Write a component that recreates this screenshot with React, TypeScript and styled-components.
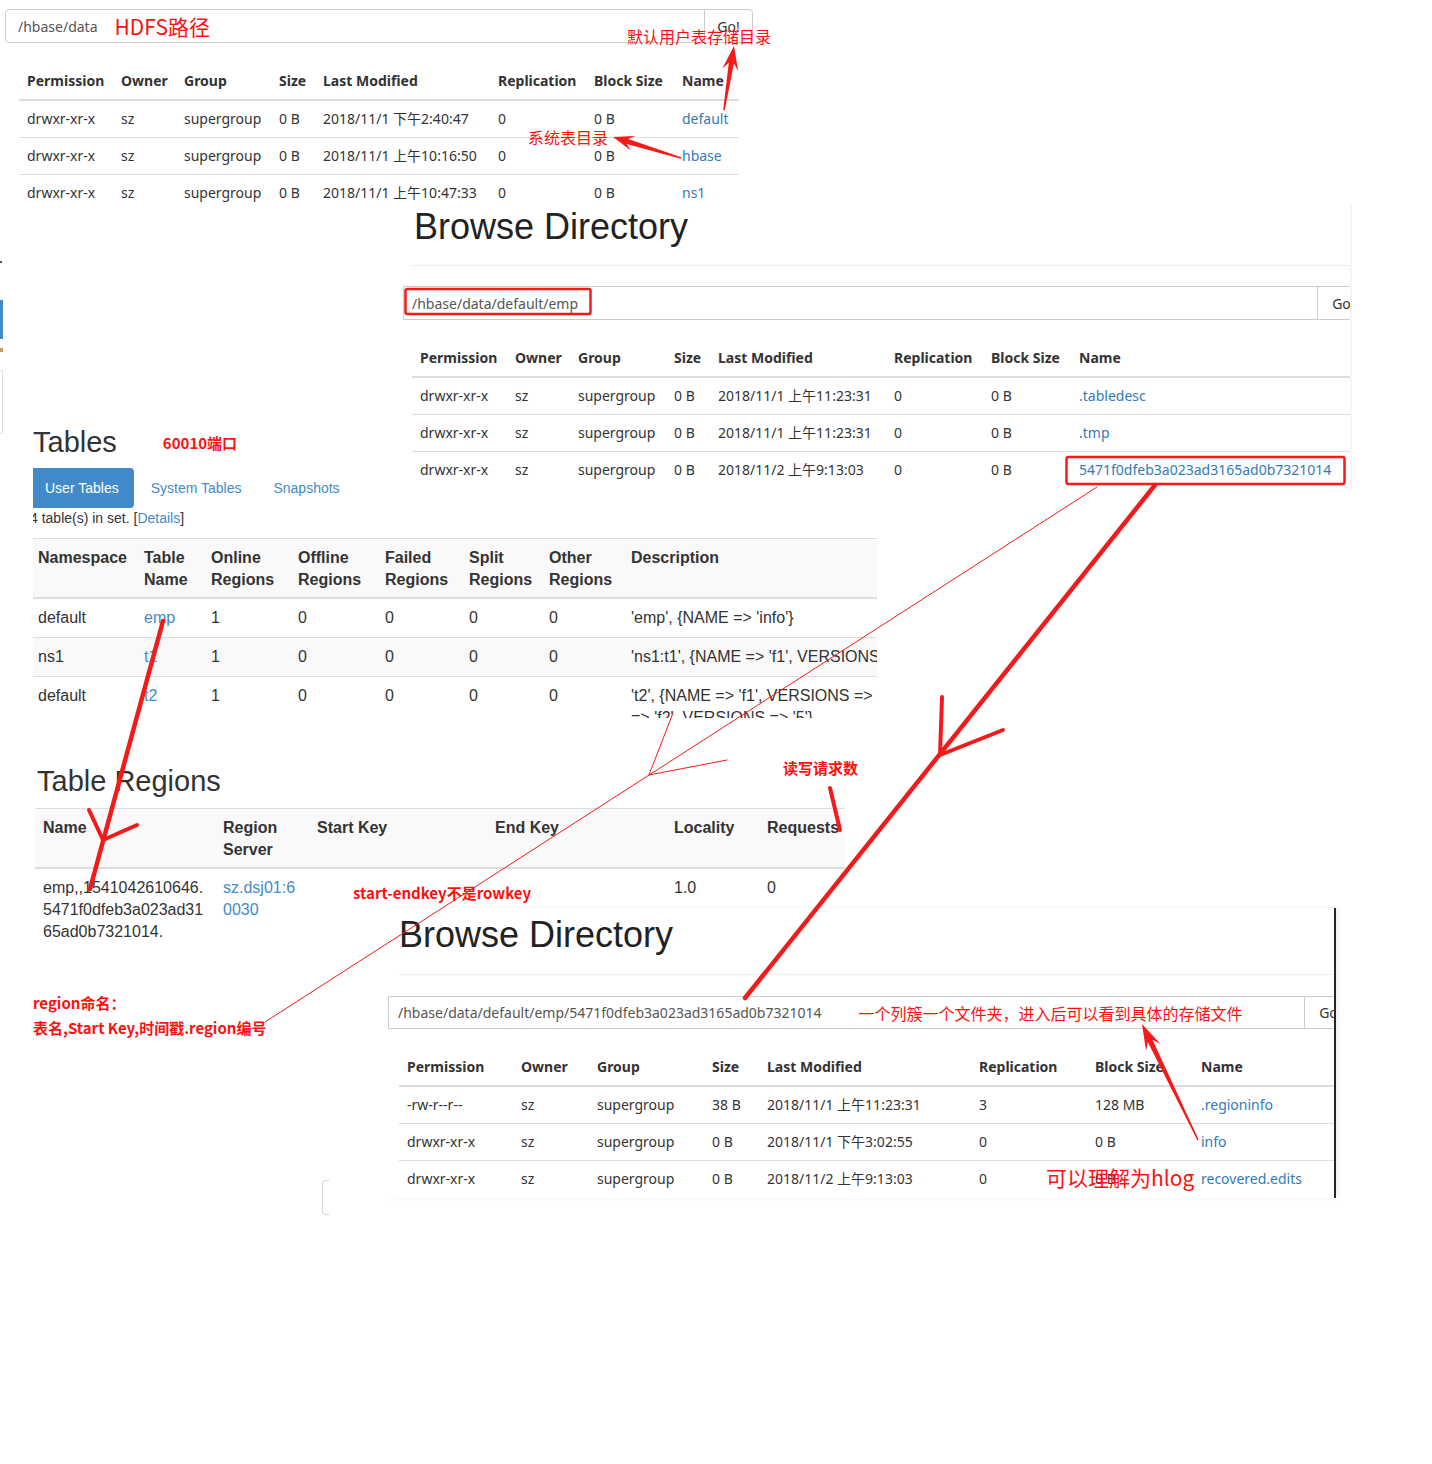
import React from "react";
import styled, { createGlobalStyle } from "styled-components";

const GlobalStyle = createGlobalStyle`
  html, body { margin: 0; padding: 0; background: #fff; }
  body { font-family: "Noto Sans", "Noto Sans CJK SC", sans-serif; }
`;

const RED = "#ff1010";
const LINE_RED = "#f51a1a";

/* ---------- canvas & scraps ---------- */

const Canvas = styled.div`
  position: relative;
  width: 1432px;
  height: 1464px;
  overflow: hidden;
  background: #fff;
`;

const Scrap = styled.section<{ $x: number; $y: number; $w: number; $h: number }>`
  position: absolute;
  left: ${(p) => p.$x}px;
  top: ${(p) => p.$y}px;
  width: ${(p) => p.$w}px;
  height: ${(p) => p.$h}px;
  box-sizing: border-box;
  overflow: hidden;
  background: #fff;
  display: flex;
  flex-direction: column;
  align-items: flex-start;
`;

const HdfsScrap = styled(Scrap)<{ $edge?: "soft" | "dark" }>`
  font-family: "Noto Sans", "Noto Sans CJK SC", sans-serif;
  font-size: 14px;
  color: #333;
  border-right: ${(p) =>
    p.$edge === "dark" ? "2px solid #262626" : p.$edge === "soft" ? "2px solid #f5f5f5" : "0"};
  box-shadow: ${(p) => (p.$edge === "dark" ? "3px 0 4px rgba(0,0,0,0.06)" : "none")};
`;

const HBaseScrap = styled(Scrap)`
  font-family: "Liberation Sans", Arial, "Noto Sans CJK SC", sans-serif;
  font-size: 14px;
  color: #333;
`;

/* ---------- HDFS page parts ---------- */

const PageTitle = styled.h1<{ $ml: number; $mt: number }>`
  margin: ${(p) => p.$mt}px 0 0 ${(p) => p.$ml}px;
  font-family: "Liberation Sans", Arial, sans-serif;
  font-size: 36px;
  font-weight: 400;
  line-height: 40px;
  color: #222;
  white-space: nowrap;
  flex: none;
`;

const Rule = styled.div<{ $ml: number; $mt: number }>`
  flex: none;
  align-self: stretch;
  margin: ${(p) => p.$mt}px 0 0 ${(p) => p.$ml}px;
  border-top: 1px solid #eee;
`;

const PathGroup = styled.div<{ $w: number; $h: number; $ml: number; $mt: number; $round?: boolean }>`
  flex: none;
  display: flex;
  box-sizing: border-box;
  width: ${(p) => p.$w}px;
  height: ${(p) => p.$h}px;
  margin: ${(p) => p.$mt}px 0 0 ${(p) => p.$ml}px;
  border: 1px solid #ccc;
  border-radius: ${(p) => (p.$round ? "4px" : "0")};
  background: #fff;
`;

const PathField = styled.div<{ $pl: number }>`
  flex: 1;
  display: flex;
  align-items: center;
  padding-left: ${(p) => p.$pl}px;
  color: #555;
  white-space: nowrap;
  overflow: hidden;
`;

const GoButton = styled.div`
  flex: none;
  width: 48px;
  box-sizing: border-box;
  border-left: 1px solid #ccc;
  display: flex;
  align-items: center;
  justify-content: center;
  color: #333;
`;

const InlineNote = styled.span<{ $size: number; $gap: number }>`
  margin-left: ${(p) => p.$gap}px;
  font-family: "Noto Sans CJK SC", sans-serif;
  font-size: ${(p) => p.$size}px;
  color: ${RED};
  line-height: 1;
`;

const DirTable = styled.table<{ $w: number; $ml: number; $mt: number }>`
  flex: none;
  width: ${(p) => p.$w}px;
  margin: ${(p) => p.$mt}px 0 0 ${(p) => p.$ml}px;
  border-collapse: collapse;
  table-layout: fixed;
  font-size: 14px;
`;

const Col = styled.col<{ $w: number }>`
  width: ${(p) => p.$w}px;
`;

const DirHead = styled.th`
  text-align: left;
  font-weight: 700;
  padding: 8px;
  line-height: 20px;
  border-bottom: 2px solid #ddd;
  white-space: nowrap;
  color: #333;
`;

const DirCell = styled.td<{ $link?: boolean }>`
  padding: 8px;
  line-height: 20px;
  border-top: 1px solid #ddd;
  white-space: nowrap;
  color: ${(p) => (p.$link ? "#337ab7" : "#333")};
`;

/* ---------- HBase page parts ---------- */

const TitleRow = styled.div<{ $mt: number }>`
  flex: none;
  display: flex;
  align-items: center;
  margin-top: ${(p) => p.$mt}px;
`;

const SectionTitle = styled.h2<{ $ml?: number }>`
  margin: 0 0 0 ${(p) => p.$ml ?? 0}px;
  font-size: 29px;
  font-weight: 400;
  line-height: 32px;
  color: #333;
  white-space: nowrap;
`;

const TabBar = styled.nav`
  flex: none;
  display: flex;
  gap: 2px;
  margin: 10px 0 0 -3px;
`;

const Tab = styled.span<{ $active?: boolean }>`
  padding: 10px 15px;
  line-height: 20px;
  border-radius: 4px;
  background: ${(p) => (p.$active ? "#428bca" : "transparent")};
  color: ${(p) => (p.$active ? "#fff" : "#428bca")};
  white-space: nowrap;
`;

const CountLine = styled.div`
  flex: none;
  margin-left: -3px;
  line-height: 20px;
  white-space: nowrap;
`;

const Link = styled.span`
  color: #428bca;
`;

const GridTable = styled.table<{ $w: number; $ml: number; $mt: number }>`
  flex: none;
  width: ${(p) => p.$w}px;
  margin: ${(p) => p.$mt}px 0 0 ${(p) => p.$ml}px;
  border-collapse: collapse;
  table-layout: fixed;
  font-size: 16px;
`;

const GridHead = styled.th`
  text-align: left;
  vertical-align: top;
  font-weight: 700;
  padding: 8px 8px 6px;
  line-height: 22px;
  border-top: 1px solid #ddd;
  border-bottom: 2px solid #ddd;
  background: #f9f9f9;
  color: #333;
  white-space: nowrap;
`;

const GridRow = styled.tr<{ $striped?: boolean }>`
  background: ${(p) => (p.$striped ? "#f9f9f9" : "transparent")};
`;

const GridCell = styled.td<{ $link?: boolean }>`
  padding: 8px;
  line-height: 22px;
  vertical-align: top;
  border-top: 1px solid #ddd;
  white-space: nowrap;
  color: ${(p) => (p.$link ? "#428bca" : "#333")};
`;

/* ---------- fragments & overlay ---------- */

const EdgeScrap = styled.div`
  position: absolute;
  left: 0;
  top: 261px;
  display: flex;
  flex-direction: column;
  align-items: flex-start;
`;

const EdgeBit = styled.div<{ $mt: number; $h: number; $w: number; $c: string }>`
  margin-top: ${(p) => p.$mt}px;
  width: ${(p) => p.$w}px;
  height: ${(p) => p.$h}px;
  background: ${(p) => p.$c};
`;

const EdgeFrame = styled.div`
  margin-top: 18px;
  width: 2px;
  height: 62px;
  border-right: 1px solid #e2e2e2;
  border-top: 1px solid #e2e2e2;
  border-bottom: 1px solid #e2e2e2;
`;

const CornerScrap = styled.div`
  position: absolute;
  left: 322px;
  top: 1180px;
  width: 6px;
  height: 33px;
  border: 1px solid #d8d8d8;
  border-right: 0;
  border-radius: 4px 0 0 4px;
`;

const Overlay = styled.svg`
  position: absolute;
  left: 0;
  top: 0;
  width: 1432px;
  height: 1464px;
  pointer-events: none;
  z-index: 10;
`;

const Note = styled.span<{ $x: number; $y: number; $size: number; $bold?: boolean }>`
  position: absolute;
  left: ${(p) => p.$x}px;
  top: ${(p) => p.$y}px;
  z-index: 20;
  font-family: "Noto Sans CJK SC", sans-serif;
  font-size: ${(p) => p.$size}px;
  font-weight: ${(p) => (p.$bold ? 700 : 400)};
  line-height: 1;
  color: ${RED};
  white-space: nowrap;
`;

/* ---------- data ---------- */

const DIR_HEADERS = ["Permission", "Owner", "Group", "Size", "Last Modified", "Replication", "Block Size", "Name"];

const ROOT_ROWS = [
  ["drwxr-xr-x", "sz", "supergroup", "0 B", "2018/11/1 下午2:40:47", "0", "0 B", "default"],
  ["drwxr-xr-x", "sz", "supergroup", "0 B", "2018/11/1 上午10:16:50", "0", "0 B", "hbase"],
  ["drwxr-xr-x", "sz", "supergroup", "0 B", "2018/11/1 上午10:47:33", "0", "0 B", "ns1"],
];

const EMP_ROWS = [
  ["drwxr-xr-x", "sz", "supergroup", "0 B", "2018/11/1 上午11:23:31", "0", "0 B", ".tabledesc"],
  ["drwxr-xr-x", "sz", "supergroup", "0 B", "2018/11/1 上午11:23:31", "0", "0 B", ".tmp"],
  ["drwxr-xr-x", "sz", "supergroup", "0 B", "2018/11/2 上午9:13:03", "0", "0 B", "5471f0dfeb3a023ad3165ad0b7321014"],
];

const REGION_ROWS = [
  ["-rw-r--r--", "sz", "supergroup", "38 B", "2018/11/1 上午11:23:31", "3", "128 MB", ".regioninfo"],
  ["drwxr-xr-x", "sz", "supergroup", "0 B", "2018/11/1 下午3:02:55", "0", "0 B", "info"],
  ["drwxr-xr-x", "sz", "supergroup", "0 B", "2018/11/2 上午9:13:03", "0", "0 B", "recovered.edits"],
];

type Pt = [number, number];

function arrowPoints(tail: Pt, tip: Pt, headLen: number, headHalf: number, neckHalf: number, tailHalf: number) {
  const dx = tip[0] - tail[0];
  const dy = tip[1] - tail[1];
  const len = Math.hypot(dx, dy);
  const ux = dx / len;
  const uy = dy / len;
  const px = -uy;
  const py = ux;
  const bx = tip[0] - ux * headLen;
  const by = tip[1] - uy * headLen;
  const nx = tip[0] - ux * headLen * 0.72;
  const ny = tip[1] - uy * headLen * 0.72;
  const pts: Pt[] = [
    tip,
    [bx + px * headHalf, by + py * headHalf],
    [nx + px * neckHalf, ny + py * neckHalf],
    [tail[0] + px * tailHalf, tail[1] + py * tailHalf],
    [tail[0] - px * tailHalf, tail[1] - py * tailHalf],
    [nx - px * neckHalf, ny - py * neckHalf],
    [bx - px * headHalf, by - py * headHalf],
  ];
  return pts.map((p) => `${p[0].toFixed(1)},${p[1].toFixed(1)}`).join(" ");
}

/* ---------- building blocks ---------- */

function DirListing({ cols, rows, ml, mt }: { cols: number[]; rows: string[][]; ml: number; mt: number }) {
  const total = cols.reduce((a, b) => a + b, 0);
  return (
    <DirTable $w={total} $ml={ml} $mt={mt}>
      <colgroup>
        {cols.map((w, i) => (
          <Col key={i} $w={w} />
        ))}
      </colgroup>
      <thead>
        <tr>
          {DIR_HEADERS.map((h) => (
            <DirHead key={h}>{h}</DirHead>
          ))}
        </tr>
      </thead>
      <tbody>
        {rows.map((r, i) => (
          <tr key={i}>
            {r.map((c, j) => (
              <DirCell key={j} $link={j === 7}>
                {c}
              </DirCell>
            ))}
          </tr>
        ))}
      </tbody>
    </DirTable>
  );
}

function TablesScrap() {
  const cols = [106, 67, 87, 87, 84, 80, 82, 407];
  const rows: { ns: string; name: string; desc: React.ReactNode; striped?: boolean }[] = [
    { ns: "default", name: "emp", desc: "'emp', {NAME => 'info'}" },
    { ns: "ns1", name: "t1", desc: "'ns1:t1', {NAME => 'f1', VERSIONS => '1'}", striped: true },
    {
      ns: "default",
      name: "t2",
      desc: (
        <>
          {"'t2', {NAME => 'f1', VERSIONS =>"}
          <br />
          {"=> 'f2', VERSIONS => '5'}"}
        </>
      ),
    },
  ];
  return (
    <HBaseScrap $x={33} $y={420} $w={844} $h={298}>
      <TitleRow $mt={6}>
        <SectionTitle>Tables</SectionTitle>
        <InlineNote $size={15} $gap={46}>
          <b>60010端口</b>
        </InlineNote>
      </TitleRow>
      <TabBar>
        <Tab $active>User Tables</Tab>
        <Tab>System Tables</Tab>
        <Tab>Snapshots</Tab>
      </TabBar>
      <CountLine>
        4 table(s) in set. [<Link>Details</Link>]
      </CountLine>
      <GridTable $w={1000} $ml={-3} $mt={10}>
        <colgroup>
          {cols.map((w, i) => (
            <Col key={i} $w={w} />
          ))}
        </colgroup>
        <thead>
          <tr>
            <GridHead>Namespace</GridHead>
            <GridHead>
              Table
              <br />
              Name
            </GridHead>
            <GridHead>
              Online
              <br />
              Regions
            </GridHead>
            <GridHead>
              Offline
              <br />
              Regions
            </GridHead>
            <GridHead>
              Failed
              <br />
              Regions
            </GridHead>
            <GridHead>
              Split
              <br />
              Regions
            </GridHead>
            <GridHead>
              Other
              <br />
              Regions
            </GridHead>
            <GridHead>Description</GridHead>
          </tr>
        </thead>
        <tbody>
          {rows.map((r, i) => (
            <GridRow key={i} $striped={r.striped}>
              <GridCell>{r.ns}</GridCell>
              <GridCell $link>{r.name}</GridCell>
              <GridCell>1</GridCell>
              <GridCell>0</GridCell>
              <GridCell>0</GridCell>
              <GridCell>0</GridCell>
              <GridCell>0</GridCell>
              <GridCell>{r.desc}</GridCell>
            </GridRow>
          ))}
        </tbody>
      </GridTable>
    </HBaseScrap>
  );
}

function RegionsScrap() {
  const cols = [180, 94, 178, 179, 93, 86];
  return (
    <HBaseScrap $x={35} $y={760} $w={810} $h={190}>
      <TitleRow $mt={5}>
        <SectionTitle $ml={2}>Table Regions</SectionTitle>
      </TitleRow>
      <GridTable $w={810} $ml={0} $mt={11}>
        <colgroup>
          {cols.map((w, i) => (
            <Col key={i} $w={w} />
          ))}
        </colgroup>
        <thead>
          <tr>
            <GridHead>Name</GridHead>
            <GridHead>
              Region
              <br />
              Server
            </GridHead>
            <GridHead>Start Key</GridHead>
            <GridHead>End Key</GridHead>
            <GridHead>Locality</GridHead>
            <GridHead>Requests</GridHead>
          </tr>
        </thead>
        <tbody>
          <GridRow>
            <GridCell>
              emp,,1541042610646.
              <br />
              5471f0dfeb3a023ad31
              <br />
              65ad0b7321014.
            </GridCell>
            <GridCell $link>
              sz.dsj01:6
              <br />
              0030
            </GridCell>
            <GridCell />
            <GridCell />
            <GridCell>1.0</GridCell>
            <GridCell>0</GridCell>
          </GridRow>
        </tbody>
      </GridTable>
    </HBaseScrap>
  );
}

export default function App() {
  const thick = { stroke: LINE_RED, strokeWidth: 4.5, strokeLinecap: "round" as const };
  const thin = { stroke: LINE_RED, strokeWidth: 1, strokeLinecap: "round" as const };
  return (
    <>
      <GlobalStyle />
      <Canvas>
        {/* top: /hbase/data listing */}
        <HdfsScrap $x={5} $y={9} $w={750} $h={196}>
          <PathGroup $w={748} $h={34} $ml={0} $mt={0} $round>
            <PathField $pl={12}>
              /hbase/data
              <InlineNote $size={21} $gap={17}>
                HDFS路径
              </InlineNote>
            </PathField>
            <GoButton>Go!</GoButton>
          </PathGroup>
          <DirListing cols={[94, 63, 95, 44, 175, 96, 88, 65]} rows={ROOT_ROWS} ml={14} mt={20} />
        </HdfsScrap>

        <EdgeScrap>
          <EdgeBit $mt={0} $h={2} $w={2} $c="#555" />
          <EdgeBit $mt={37} $h={39} $w={3} $c="#428bca" />
          <EdgeBit $mt={9} $h={4} $w={3} $c="#c99a55" />
          <EdgeFrame />
        </EdgeScrap>

        <TablesScrap />
        <RegionsScrap />

        {/* Browse Directory: /hbase/data/default/emp */}
        <HdfsScrap $x={400} $y={205} $w={952} $h={285} $edge="soft">
          <PageTitle $ml={14} $mt={2}>
            Browse Directory
          </PageTitle>
          <Rule $ml={10} $mt={18} />
          <PathGroup $w={963} $h={34} $ml={3} $mt={20}>
            <PathField $pl={8}>/hbase/data/default/emp</PathField>
            <GoButton>Go</GoButton>
          </PathGroup>
          <DirListing cols={[95, 63, 96, 44, 176, 97, 88, 281]} rows={EMP_ROWS} ml={12} mt={20} />
        </HdfsScrap>

        {/* Browse Directory: region folder */}
        <HdfsScrap $x={388} $y={908} $w={948} $h={290} $edge="dark">
          <PageTitle $ml={11} $mt={7}>
            Browse Directory
          </PageTitle>
          <Rule $ml={11} $mt={19} />
          <PathGroup $w={965} $h={33} $ml={0} $mt={21}>
            <PathField $pl={9}>
              /hbase/data/default/emp/5471f0dfeb3a023ad3165ad0b7321014
              <InlineNote $size={16} $gap={37}>
                一个列簇一个文件夹，进入后可以看到具体的存储文件
              </InlineNote>
            </PathField>
            <GoButton>Go</GoButton>
          </PathGroup>
          <DirListing cols={[114, 76, 115, 55, 212, 116, 106, 141]} rows={REGION_ROWS} ml={11} mt={20} />
        </HdfsScrap>

        <CornerScrap />

        {/* annotations */}
        <Overlay viewBox="0 0 1432 1464">
          <rect x={405.5} y={289} width={185} height={25} rx={2} fill="none" stroke={LINE_RED} strokeWidth={2.5} />
          <rect x={1066.5} y={457} width={278} height={27} rx={2} fill="none" stroke={LINE_RED} strokeWidth={2.5} />

          <polygon points={arrowPoints([724, 110], [734, 46], 24, 8, 2.6, 0.8)} fill={LINE_RED} />
          <polygon points={arrowPoints([681, 158], [613, 137], 21, 7.5, 2.6, 0.8)} fill={LINE_RED} />
          <polygon points={arrowPoints([1198, 1140], [1142, 1024], 26, 8, 2.6, 0.8)} fill={LINE_RED} />

          <line x1={163} y1={621} x2={90} y2={889} {...thick} />
          <line x1={89} y1={810} x2={103} y2={840} {...thick} strokeWidth={4} />
          <line x1={137} y1={825} x2={103} y2={840} {...thick} strokeWidth={4} />

          <line x1={1155} y1={485} x2={745} y2={998} {...thick} />
          <line x1={942} y1={697} x2={940} y2={755} {...thick} strokeWidth={4} />
          <line x1={1003} y1={730} x2={940} y2={755} {...thick} strokeWidth={4} />

          <line x1={830} y1={788} x2={840} y2={830} {...thick} strokeWidth={4} />

          <line x1={1097} y1={487} x2={265} y2={1022} {...thin} />
          <line x1={673} y1={713} x2={649} y2={775} {...thin} />
          <line x1={727} y1={760} x2={649} y2={775} {...thin} />
        </Overlay>

        <Note $x={627} $y={28} $size={16}>
          默认用户表存储目录
        </Note>
        <Note $x={528} $y={129} $size={16}>
          系统表目录
        </Note>
        <Note $x={783} $y={760} $size={15} $bold>
          读写请求数
        </Note>
        <Note $x={353} $y={885} $size={15} $bold>
          start-endkey不是rowkey
        </Note>
        <Note $x={33} $y={995} $size={15} $bold>
          region命名：
        </Note>
        <Note $x={33} $y={1020} $size={15} $bold>
          表名,Start Key,时间戳.region编号
        </Note>
        <Note $x={1046} $y={1167} $size={21}>
          可以理解为hlog
        </Note>
      </Canvas>
    </>
  );
}
